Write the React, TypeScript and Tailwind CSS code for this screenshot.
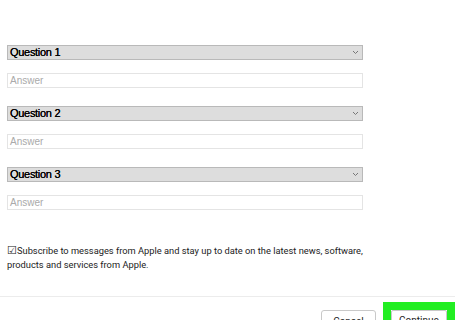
export default function App() {
  const questions = ["Question 1", "Question 2", "Question 3"];

  return (
    <div className="w-[460px] h-[320px] bg-white overflow-hidden font-['Liberation_Sans',Arial,sans-serif]">
      {/* Security questions */}
      <div className="pl-[7px] pt-[45px] w-[363px] flex flex-col">
        {questions.map((q, i) => (
          <div key={q} className={i === 0 ? "flex flex-col" : "flex flex-col mt-[18px]"}>
            <div className="h-[15px] w-[356px] bg-[#dddddd] border border-[#b9b9b9] flex items-center justify-between pl-[2px] pr-[3px]">
              <span className="text-[11px] leading-none text-black tracking-[-0.3px] [text-shadow:0_0_0.4px_#000]">{q}</span>
              <svg width="7" height="5" viewBox="0 0 7 5" className="text-[#777]">
                <path d="M1 1l2.5 2.5L6 1" fill="none" stroke="currentColor" strokeWidth="1" />
              </svg>
            </div>
            <div className="mt-[13px] h-[15px] w-[356px] bg-white border border-[#e4e4e4] flex items-center pl-[2px]">
              <span className="text-[10px] leading-none text-[#aaaaaa]">Answer</span>
            </div>
          </div>
        ))}

        {/* Subscribe checkbox */}
        <p className="mt-[34px] w-[380px] text-[9.3px] leading-[14px] text-[#222] font-['Roboto',sans-serif]">
          <span className="text-[11px] leading-none">☑</span>Subscribe to messages from Apple and stay up to date on the latest news, software,
          <br />
          products and services from Apple.
        </p>
      </div>

      {/* Footer */}
      <div className="mt-[24px] w-[455px] h-px bg-[#ececec]" />
      <div className="w-[455px] flex justify-end items-start gap-[7px] mt-[5px]">
        <button className="mt-[8px] w-[55px] h-[22px] rounded-[3px] border border-[#c9c9c9] bg-white text-[10px] text-[#222] font-['Roboto',sans-serif] flex items-start justify-center pt-[3px]">
          Cancel
        </button>
        <div className="border-[8px] border-[#22ee22]">
          <button className="w-[56px] h-[22px] rounded-[2px] border border-[#c9c9c9] bg-white text-[10px] text-[#222] font-['Roboto',sans-serif] flex items-start justify-center pt-[2px]">
            Continue
          </button>
        </div>
      </div>
    </div>
  );
}
